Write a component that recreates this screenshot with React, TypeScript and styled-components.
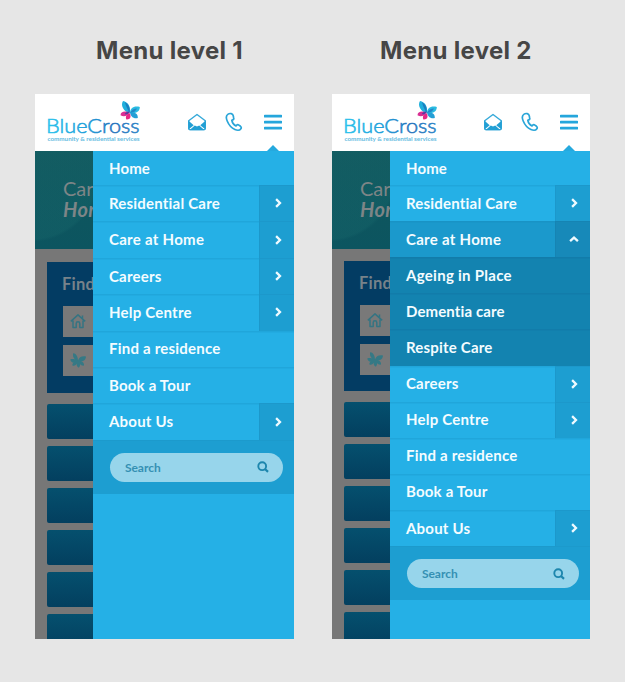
import React from "react";
import styled, { createGlobalStyle } from "styled-components";

const Global = createGlobalStyle`
  * { box-sizing: border-box; }
  body { margin: 0; background: #e6e6e6; }
`;

const Board = styled.main`
  display: flex;
  width: 625px;
  height: 682px;
  padding: 33px 35px 0;
  gap: 38px;
  overflow: hidden;
  background: #e6e6e6;
  font-family: Lato, sans-serif;
`;

const Column = styled.section<{ $width: number }>`
  width: ${(p) => p.$width}px;
  flex: none;
`;

const Title = styled.h1<{ $indent: number }>`
  margin: 0;
  height: 61px;
  padding-left: ${(p) => p.$indent}px;
  font: 700 24px/36px Inter, sans-serif;
  letter-spacing: 0.3px;
  color: #464646;
  white-space: nowrap;
`;

const Phone = styled.div`
  display: flex;
  flex-direction: column;
  height: 545px;
  overflow: hidden;
  background: #25b0e6;
`;

const Header = styled.header`
  position: relative;
  display: flex;
  flex: none;
  height: 57px;
  background: #fff;
`;

const Actions = styled.div<{ $right: number }>`
  display: flex;
  flex: 1;
  justify-content: flex-end;
  padding: 17px ${(p) => p.$right}px 0 0;
`;

const Pointer = styled.svg<{ $right: number }>`
  position: absolute;
  right: ${(p) => p.$right}px;
  bottom: 0;
`;

const Body = styled.div`
  display: flex;
  flex: 1;
  min-height: 0;
`;

const Page = styled.div`
  width: 58px;
  flex: none;
  overflow: hidden;
  background: #777;
  white-space: nowrap;
`;

const Hero = styled.div`
  height: 98px;
  padding: 27px 0 0 28px;
  background:
    radial-gradient(circle at -4px 22px, rgba(24, 104, 108, 0.35) 0 66px, transparent 69px),
    linear-gradient(#10565c, #0c5560);
  font-size: 20px;
  line-height: 21px;
  color: #7d8587;
`;

const HeroStrong = styled.div`
  font-weight: 700;
  font-style: italic;
  letter-spacing: 0.4px;
`;

const Finder = styled.div<{ $shift: number }>`
  height: ${(p) => 131 - p.$shift / 2}px;
  margin: ${(p) => 12.5 - p.$shift}px 0 11px 12px;
  padding: 12px 0 0 15px;
  background: #033c63;
  font-size: 16.5px;
  line-height: 21px;
  font-weight: 700;
  letter-spacing: 0.2px;
  color: #77828a;
`;

const Tile = styled.div`
  display: flex;
  align-items: center;
  height: 31px;
  margin: 0 0 8px 1px;
  padding-left: 6px;
  background: #797979;
`;

const FinderTiles = styled.div`
  padding-top: 11px;
`;

const Block = styled.div`
  height: 35px;
  margin: 0 0 7px 12px;
  border-radius: 2px 0 0 2px;
  background: linear-gradient(#05506e, #033f5f);
`;

const Menu = styled.nav`
  flex: 1;
  background: #25b0e6;
`;

type Tone = "plain" | "active" | "sub";
const tones: Record<Tone, string> = {
  plain: "#25b0e6",
  active: "#1b99cc",
  sub: "#1383b0",
};
const edges: Record<Tone, string> = {
  plain: "#20a6db",
  active: "#1993c5",
  sub: "#127caa",
};

const Row = styled.div<{ $h: number; $tone: Tone; $first?: boolean }>`
  display: flex;
  align-items: stretch;
  height: ${(p) => p.$h}px;
  background: ${(p) => tones[p.$tone]};
  box-shadow: ${(p) => (p.$first ? "none" : `inset 0 1.5px 0 ${edges[p.$tone]}`)};
`;

const Label = styled.span<{ $track: number }>`
  flex: 1;
  align-self: center;
  padding: 0 0 1px 16px;
  font-size: 15px;
  line-height: 20px;
  font-weight: 700;
  letter-spacing: ${(p) => p.$track}px;
  color: #f4fcff;
  white-space: nowrap;
`;

const Toggle = styled.span<{ $open?: boolean }>`
  display: flex;
  align-items: center;
  justify-content: center;
  width: 35px;
  padding-left: 3px;
  background: ${(p) => (p.$open ? "#1789b9" : "#1d9ed1")};
  box-shadow: inset 1px 1px 0 ${(p) => (p.$open ? "#1684b3" : "#1c98cb")};
`;

const SearchArea = styled.div`
  height: 54px;
  padding: 13px 11px 0 17px;
  background: #1d9ed1;
  box-shadow: inset 0 1px 0 #1c9acc;
`;

const SearchField = styled.div`
  display: flex;
  align-items: center;
  justify-content: space-between;
  height: 29px;
  padding: 0 14px 0 15px;
  border-radius: 15px;
  background: #97d5eb;
  font-size: 12px;
  font-weight: 700;
  letter-spacing: -0.05px;
  color: #3590b3;
`;

function Logo({ id }: { id: string }) {
  return (
    <svg width="112" height="57" viewBox="0 0 112 57">
      <defs>
        <linearGradient id={id} gradientUnits="userSpaceOnUse" x1="12" y1="0" x2="105" y2="0">
          <stop offset="0" stopColor="#2cc3ec" />
          <stop offset="0.45" stopColor="#219cd8" />
          <stop offset="0.7" stopColor="#2875be" />
          <stop offset="1" stopColor="#2d86c8" />
        </linearGradient>
      </defs>
      <text x="11" y="39.4" textLength="93.5" lengthAdjust="spacingAndGlyphs" fontFamily="Lato" fontWeight="300" fontSize="20.5" fill={`url(#${id})`} stroke={`url(#${id})`} strokeWidth="0.6">BlueCross</text>
      <text x="12.5" y="46.6" textLength="92" lengthAdjust="spacingAndGlyphs" fontFamily="Lato" fontWeight="700" fontSize="5.4" fill="#68bcdf">
        community &amp; residential services
      </text>
      <path d="M94.600 19.500C88.500 17 85.200 11.500 88 7C93 8 96.200 12.500 94.600 19.500Z" fill="#20b0dc" />
      <path d="M90 8.200c3.600 2 5.400 5.500 4.600 10.800-1.500-3-3.600-6.200-4.600-10.800Z" fill="#1a7fc0" />
      <path d="M95 19C95 14 99 11.500 104.800 13C105 17.500 100.500 20.200 95 19Z" fill="#2abbe2" />
      <path d="M95 19c1.500-3 4-4.400 7-4.400-1.200 2.800-4 4.600-7 4.400Z" fill="#2387c8" />
      <path d="M95 18.600c4.500-.8 8 .6 7.800 5.400-3.800 1.300-7-1-7.800-5.400Z" fill="#249fd6" />
      <path d="M94.500 18.600C90 16.600 85.500 17.600 85.500 21.200 88.600 23.600 92.800 22 94.500 18.600Z" fill="#d92f93" />
      <path d="M94.800 19.200C91.500 20 90 22.500 91.400 25.400 95 25.800 96.600 22.800 94.800 19.200Z" fill="#e62886" />
      <path d="M94.600 17.500c-2.400.200-3.900 1-4.900 2.400 2 1 4 .2 4.900-2.400Z" fill="#5b3a9f" />
    </svg>
  );
}

function MailIcon() {
  return (
    <svg width="20" height="22" viewBox="0 0 20 22">
      <path d="M1.700 9.800 10 3.500l8.300 6.300v7.800a1 1 0 0 1-1 1H2.700a1 1 0 0 1-1-1Z" fill="#fff" stroke="#35a9d9" strokeWidth="1.400" strokeLinejoin="round" />
      <path d="m1.300 9.600 5.400 4.600-5.200 4.200Z" fill="#229fd4" />
      <path d="m18.700 9.600-5.400 4.600 5.200 4.200Z" fill="#229fd4" />
      <path d="m2.400 19.300 5.400-4.900 2.200 1.200 2.200-1.200 5.400 4.900Z" fill="#229fd4" />
    </svg>
  );
}

function PhoneIcon() {
  return (
    <svg width="18" height="22" viewBox="0 0 18 22">
      <path
        d="M3.100 3.100C1.200 4.300 1 7.200 2.200 10c1.500 3.600 4.200 7 7.700 8.500 2.300 1 4.900.8 6-.8.600-.9.300-1.800-.4-2.400l-1.600-1.200c-.8-.6-1.600-.5-2.200.1l-.7.8c-1.600-.8-3.800-3.700-4.200-5.700l1-.4c.8-.3 1.100-1.100.9-1.900L8.200 4.600c-.4-2-3.200-2.700-5.100-1.500Z"
        fill="none" stroke="#29a5d8" strokeWidth="1.700" strokeLinejoin="round"
      />
    </svg>
  );
}

function BurgerIcon() {
  return (
    <svg width="18" height="22" viewBox="0 0 18 22">
      <path d="M.9 5.200h16.200M.9 11.200h16.200M.9 17.200h16.200" stroke="#25a6dc" strokeWidth="2.800" strokeLinecap="round" />
    </svg>
  );
}

const IconSlot = styled.span<{ $gap: number }>`
  height: 22px;
  margin-left: ${(p) => p.$gap}px;
`;

function Chevron({ up }: { up?: boolean }) {
  return (
    <svg width="10" height="10" viewBox="0 0 10 10">
      <path d={up ? "M1.100 7.200 5 3.600 8.900 7.200" : "M3.100 1.100 7 5 3.100 8.900"} fill="none" stroke="#effaff" strokeWidth="2.300" />
    </svg>
  );
}

function HouseIcon() {
  return (
    <svg width="18" height="18" viewBox="0 0 18 18">
      <path d="M1.800 9.400 9 2.900l7.200 6.500M4 8.400v7.200h3.200v-4.200c0-2.100 3.600-2.100 3.600 0v4.200H14V8.400M13.500 3.400v3" fill="none" stroke="#357482" strokeWidth="1.500" strokeLinejoin="round" />
    </svg>
  );
}

function ButterflyIcon() {
  return (
    <svg width="18" height="18" viewBox="0 0 18 18">
      <path d="M8 10C4.600 8 3.300 4.600 4.400 2 7.400 3 9 6 9 9.600 9.900 6 13 4.700 17 5.400c0 3-2.400 5-6 5.200 3-.2 4.400 1.600 4 4-1.800.2-3.200-.4-4-1.600.2 1.700-.3 3-1.300 3.700C8 15.900 7.400 14.300 7.900 12.600 6.700 14.600 5 15.200 3.400 14.500c-.2-1.200.3-2.200 1.200-2.800C3 11.700 1.500 10.500 1.300 8.500 3.800 7.600 6.500 8.200 8 10Z" fill="#357985" />
    </svg>
  );
}

function SearchIcon() {
  return (
    <svg width="12" height="12" viewBox="0 0 12 12">
      <circle cx="5.200" cy="5.200" r="3.900" fill="none" stroke="#1d86ad" strokeWidth="1.900" />
      <path d="m8 8 3 2.900" stroke="#1d86ad" strokeWidth="2.200" />
    </svg>
  );
}

type Item = { text: string; track: number; tone?: Tone; toggle?: "closed" | "open" };

const home: Item = { text: "Home", track: 0.1 };
const residential: Item = { text: "Residential Care", track: 0.2, toggle: "closed" };
const careAtHome: Item = { text: "Care at Home", track: 0.28, toggle: "closed" };
const rest: Item[] = [
  { text: "Careers", track: 0.2, toggle: "closed" },
  { text: "Help Centre", track: 0.22, toggle: "closed" },
  { text: "Find a residence", track: 0.22 },
  { text: "Book a Tour", track: 0.2 },
  { text: "About Us", track: 0.2, toggle: "closed" },
];
const levelOne: Item[] = [home, residential, careAtHome, ...rest];
const levelTwo: Item[] = [
  home,
  residential,
  { ...careAtHome, tone: "active", toggle: "open" },
  { text: "Ageing in Place", track: 0.28, tone: "sub" },
  { text: "Dementia care", track: 0.12, tone: "sub" },
  { text: "Respite Care", track: 0.2, tone: "sub" },
  ...rest,
];

type ScreenProps = {
  title: string;
  indent: number;
  width: number;
  rowHeight: number;
  shift: number;
  inset: number;
  items: Item[];
  id: string;
};

function Screen({ title, indent, width, rowHeight, shift, inset, items, id }: ScreenProps) {
  return (
    <Column $width={width}>
      <Title $indent={indent}>{title}</Title>
      <Phone>
        <Header>
          <Logo id={id} />
          <Actions $right={inset}>
            <IconSlot $gap={0}><MailIcon /></IconSlot>
            <IconSlot $gap={18}><PhoneIcon /></IconSlot>
            <IconSlot $gap={21}><BurgerIcon /></IconSlot>
          </Actions>
          <Pointer $right={inset + 3} width="12" height="6" viewBox="0 0 12 6">
            <path d="M0 6 6 0l6 6Z" fill="#25a9de" />
          </Pointer>
        </Header>
        <Body>
          <Page>
            <Hero>
              Care at
              <HeroStrong>Home</HeroStrong>
            </Hero>
            <Finder $shift={shift}>
              Find
              <FinderTiles>
                <Tile><HouseIcon /></Tile>
                <Tile><ButterflyIcon /></Tile>
              </FinderTiles>
            </Finder>
            {[0, 1, 2, 3, 4, 5].map((n) => <Block key={n} />)}
          </Page>
          <Menu>
            {items.map((item, i) => (
              <Row key={item.text} $h={i === 0 ? 34 : rowHeight} $tone={item.tone ?? "plain"} $first={i === 0}>
                <Label $track={item.track}>{item.text}</Label>
                {item.toggle && (
                  <Toggle $open={item.toggle === "open"}>
                    <Chevron up={item.toggle === "open"} />
                  </Toggle>
                )}
              </Row>
            ))}
            <SearchArea>
              <SearchField>
                Search
                <SearchIcon />
              </SearchField>
            </SearchArea>
          </Menu>
        </Body>
      </Phone>
    </Column>
  );
}

export default function App() {
  return (
    <>
      <Global />
      <Board>
        <Screen title="Menu level 1" indent={61} width={259} rowHeight={36.42} shift={0} inset={12} items={levelOne} id="logo-a" />
        <Screen title="Menu level 2" indent={48} width={258} rowHeight={36.12} shift={1} inset={12} items={levelTwo} id="logo-b" />
      </Board>
    </>
  );
}
